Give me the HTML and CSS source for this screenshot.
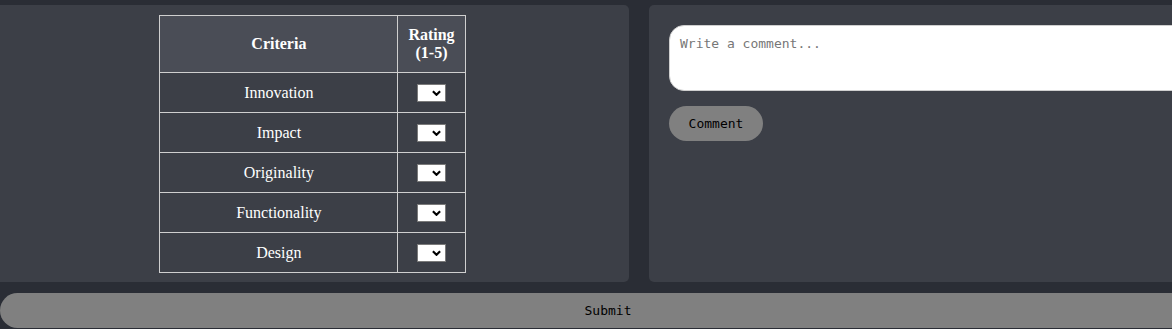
FILE: index.html
```html
<!DOCTYPE html>
<html lang="en">
<head>
    <meta charset="UTF-8">
    <meta name="viewport" content="width=device-width, initial-scale=1.0">
    <title>Project Review</title>
    <link rel="stylesheet" href="styles.css">
</head>
<body>
    <main class="page">
        <div class="panels">
            <section class="panel rating-panel">
                <table class="criteria">
                    <thead>
                        <tr>
                            <th class="col-name">Criteria</th>
                            <th class="col-rating">Rating (1-5)</th>
                        </tr>
                    </thead>
                    <tbody>
                        <tr>
                            <td>Innovation</td>
                            <td><span class="pick"><select></select><svg viewBox="0 0 10 6"><path d="M1 1 L5 5 L9 1" /></svg></span></td>
                        </tr>
                        <tr>
                            <td>Impact</td>
                            <td><span class="pick"><select></select><svg viewBox="0 0 10 6"><path d="M1 1 L5 5 L9 1" /></svg></span></td>
                        </tr>
                        <tr>
                            <td>Originality</td>
                            <td><span class="pick"><select></select><svg viewBox="0 0 10 6"><path d="M1 1 L5 5 L9 1" /></svg></span></td>
                        </tr>
                        <tr>
                            <td>Functionality</td>
                            <td><span class="pick"><select></select><svg viewBox="0 0 10 6"><path d="M1 1 L5 5 L9 1" /></svg></span></td>
                        </tr>
                        <tr>
                            <td>Design</td>
                            <td><span class="pick"><select></select><svg viewBox="0 0 10 6"><path d="M1 1 L5 5 L9 1" /></svg></span></td>
                        </tr>
                    </tbody>
                </table>
            </section>

            <section class="panel comment-panel">
                <textarea class="comment-box" placeholder="Write a comment..."></textarea>
                <button type="button" class="btn comment-btn">Comment</button>
            </section>
        </div>

        <button type="button" class="btn submit-btn">Submit</button>
    </main>
</body>
</html>
```

FILE: styles.css
```css
html, body {
    margin: 0;
    padding: 0;
    overflow: hidden;
}

body {
    background-color: #2a2d35;
    color: white;
    font-family: 'Liberation Serif', 'Times New Roman', serif;
    font-size: 16px;
}

.page {
    width: 1300px;
    padding-top: 5px;
}

.panels {
    display: flex;
    gap: 20px;
    margin-left: -4px;
}

.panel {
    background-color: #3c3f47;
    border-radius: 5px;
    height: 277px;
    box-sizing: border-box;
}

.rating-panel {
    width: 633px;
    padding: 10px 0;
}

.comment-panel {
    width: 632px;
    padding: 20px;
    display: flex;
    flex-direction: column;
    align-items: flex-start;
}

/* criteria table */
.criteria {
    margin: 0 auto;
    border-collapse: collapse;
    table-layout: fixed;
}

.criteria th, .criteria td {
    border: 1px solid #cfcfcf;
    text-align: center;
    vertical-align: middle;
}

.criteria th {
    background-color: #4a4d56;
    font-weight: bold;
    line-height: 18px;
    padding: 10px;
}

.criteria td {
    line-height: 18px;
    height: 40px;
    padding: 0 10px;
    box-sizing: border-box;
}

.col-name {
    width: 217px;
}

.col-rating {
    width: 46px;
}

.pick {
    position: relative;
    display: inline-block;
    width: 29px;
    height: 18px;
    vertical-align: middle;
}

    .pick select {
        -webkit-appearance: none;
        appearance: none;
        display: block;
        width: 29px;
        height: 18px;
        margin: 0;
        padding: 0;
        border: 1px solid #7a7a7a;
        border-radius: 0;
        background-color: white;
    }

    .pick svg {
        position: absolute;
        top: 6px;
        right: 5px;
        width: 9px;
        height: 6px;
        pointer-events: none;
    }

    .pick path {
        fill: none;
        stroke: #000;
        stroke-width: 2.4;
    }

/* comments */
.comment-box {
    width: 100%;
    height: 66px;
    box-sizing: border-box;
    padding: 10px;
    border: 1px solid #cfcfcf;
    border-radius: 15px;
    background-color: white;
    font-family: 'DejaVu Sans Mono', 'Liberation Mono', monospace;
    font-size: 13px;
    resize: none;
    outline: none;
}

    .comment-box::placeholder {
        color: #777;
    }

.btn {
    border: none;
    background-color: #808080;
    color: #000;
    font-family: 'DejaVu Sans Mono', 'Liberation Mono', monospace;
    font-size: 13px;
    cursor: pointer;
}

.comment-btn {
    margin-top: 15px;
    height: 35px;
    width: 94px;
    padding: 0;
    border-radius: 18px;
}

.submit-btn {
    display: block;
    margin-top: 11px;
    width: 1216px;
    height: 35px;
    border-radius: 18px;
}
```
